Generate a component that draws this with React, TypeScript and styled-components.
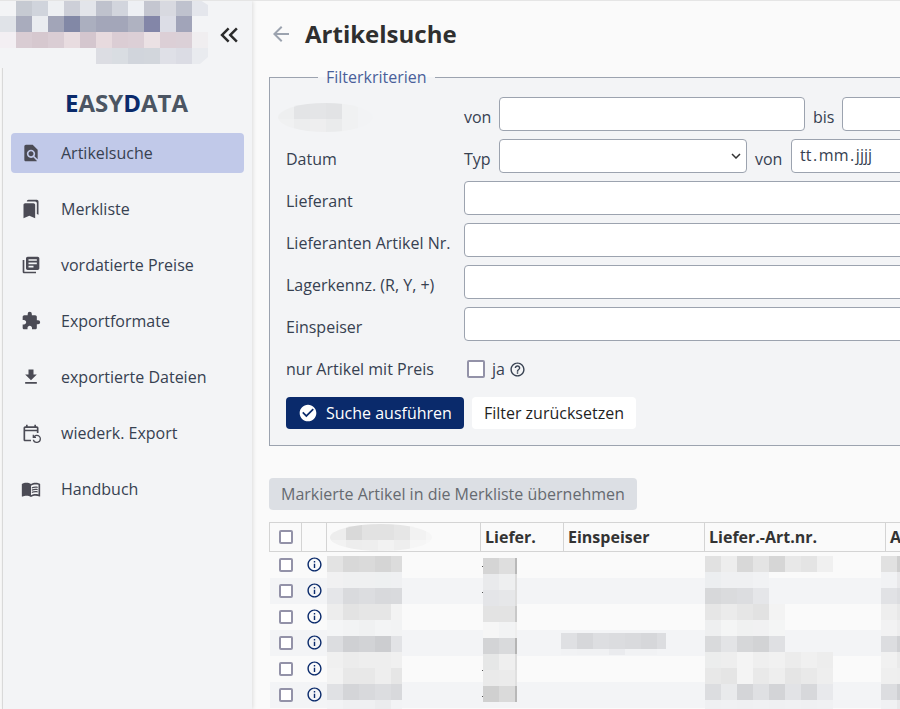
import styled, { createGlobalStyle } from 'styled-components';
import {
  MdArrowBack,
  MdBookmarks,
  MdCheckCircle,
  MdExtension,
  MdFileDownload,
  MdFindInPage,
  MdHelpOutline,
  MdInfoOutline,
  MdKeyboardDoubleArrowLeft,
  MdLibraryBooks,
  MdMenuBook,
  MdOutlineEventRepeat,
} from 'react-icons/md';

const navItems = [
  { label: 'Artikelsuche', icon: MdFindInPage, active: true },
  { label: 'Merkliste', icon: MdBookmarks },
  { label: 'vordatierte Preise', icon: MdLibraryBooks },
  { label: 'Exportformate', icon: MdExtension },
  { label: 'exportierte Dateien', icon: MdFileDownload },
  { label: 'wiederk. Export', icon: MdOutlineEventRepeat },
  { label: 'Handbuch', icon: MdMenuBook },
];

// the blurred parts of the screenshot, as rows of 16px blocks
const logoBlocks = [
  ['#f3f4f6', '#c6cad2', '#d0d4dc', '#eef0f3', '#cdcfd8', '#e3e5ea', '#bfc2cd', '#d2d5dd', '#eef0f4', '#c4c6d0', '#d8d9e0', '#bfc2ce', '#e4e6ec'],
  ['#e0e3e8', '#a9acbd', '#eaecf0', '#a2a5b8', '#8288a6', '#abafbf', '#a3a6b9', '#a3a6b9', '#afb2c1', '#8386a8', '#dcdde6', '#a1a4b9', '#f3f4f6'],
  ['#f3eff3', '#d9ccd3', '#d6c8cf', '#dacdd4', '#e8dce0', '#d4c6ce', '#e7dade', '#dbcdd4', '#dccfd6', '#ebe1e4', '#dccfd6', '#dbd0d7', '#f0eef0'],
  ['', '', '', '', '', '', '#dcdde3', '#d9dde2', '#d1d5dc', '#d2d6dc', '#dfe0e7', '#dbdce4', '#e9ebef'],
];

const filterLabelBlocks = [
  ['#eeeff0', '#e3e4e6', '#e4e5e7', '#e2e3e5', '#f0f1f2', '#f2f3f5'],
  ['#f0f1f2', '#ecedee', '#eeeeef', '#eaebec', '#f0f1f2', '#f2f3f5'],
];

const headBlocks = [
  ['#ededed', '#d9d9d9', '#e2e2e2', '#e2e2e2', '#e6e6e6', '#f2f2f2', '#f6f6f6'],
  ['#f2f2f2', '#ededed', '#eeeeee', '#f2f2f2', '#eeeeee', '#f6f6f6', '#f8f8f8'],
];

const nameBlocks = [
  ['#e3e3e3', '#d8d8d8', '#dadada', '#d5d5d5', '#dcdcdc'],
  ['#f1f1f2', '#eff0f1', '#eff0f1', '#eef0f1', '#eff0f2'],
  ['#e5e6e9', '#d9dadd', '#dcdde0', '#d8d9dc', '#d9dadd'],
  ['#ededed', '#e3e3e3', '#e6e6e6', '#e6e6e6', '#f3f3f3'],
  ['#f4f5f6', '#f2f3f4', '#f0f1f2', '#f3f4f5', '#f2f3f4'],
  ['#dcdde0', '#cfd0d3', '#d2d3d6', '#cccdd0', '#e2e3e6'],
  ['#f0f0f0', '#ececec', '#eeeeee', '#eeeeee', '#f0f0f0'],
  ['#f2f2f2', '#e8e8e8', '#e8e8e8', '#eeeeee', '#e6e6e6'],
  ['#e0e1e4', '#d4d5d8', '#d8d9dc', '#dcdde0', '#d8d9dc'],
  ['#f2f3f5', '#eff0f2', '#eff0f2', '#ebecee', '#f2f3f5'],
];

const lieferBlocks = [
  ['#d5d5d5', '#dedede', '#b8b8b8'],
  ['#e9eaec', '#eeeff0', '#dcdcdc'],
  ['#e4e5e8', '#e6e7e9', '#dddddd'],
  ['#e3e3e3', '#e3e3e3', '#c8c8c8'],
  ['#f6f6f6', '#f2f3f4', '#eeeeee'],
  ['#d3d4d6', '#d9dadc', '#b4b4b4'],
  ['#e6e7e7', '#efefef', '#dddddd'],
  ['#eaeaea', '#ebebeb', '#e0e0e0'],
  ['#d0d0d0', '#dadada', '#b8b8b8'],
];

const einspeiserBlocks = [
  ['#dfe0e3', '#d6d7da', '#dddee1', '#dbdcdf', '#d9dadd', '#d6d7da', '#dcdde0'],
  ['#f1f2f4', '#f0f1f3', '#f0f1f3', '#eaebee', '#f1f2f4', '#f1f2f4', ''],
];

const artNrBlocks = [
  ['#e1e1e1', '#ededed', '#d8d8d8', '#e4e4e4', '#d6d6d6', '#e8e8e8', '#e4e4e4', '#f0f0f0'],
  ['#eceef0', '#eff0f2', '#eff0f2', '#f1f2f4', '', '', '', ''],
  ['#d7d8da', '#dadbdd', '#dcdde0', '#e5e6e9', '', '', '', ''],
  ['#e6e6e6', '#ebebeb', '#e6e6e6', '#e2e2e2', '#f3f3f3', '', '', ''],
  ['#eeeff0', '#f4f5f5', '#f0f1f1', '#f1f1f2', '#f4f5f5', '', '', ''],
  ['#d9dadc', '#e3e4e6', '#d6d7d9', '#d2d3d5', '#dfe0e3', '', '', ''],
  ['#eceded', '#eeeeee', '#f4f4f4', '#efefef', '#f1f1f1', '#ececec', '#f0f0f0', '#ededed'],
  ['#e8e8e8', '#e5e5e5', '#f4f4f4', '#e9e9e9', '#eeeeee', '#e5e5e5', '#e9e9e9', '#eeeeee'],
  ['#dcdde0', '#e9eaec', '#d4d5d8', '#dfe0e3', '#d3d4d7', '#e2e3e6', '#d7d8db', '#e8e9ec'],
  ['#eff0f2', '#f0f1f3', '#eff0f2', '#f0f1f3', '#eff0f2', '#f0f1f3', '#eff0f2', '#f0f1f3'],
];

const lastBlocks = [
  ['#e1e1e1', '#cfcfcf'],
  ['#f1f2f4', '#e8e8ea'],
  ['#e1e2e5', '#dcdde0'],
  ['#eeeeee', '#e8e8e8'],
  ['#f2f2f3', '#ededee'],
  ['#dcdde0', '#d0d1d4'],
  ['#f1f1f1', '#eaeaea'],
  ['#efefef', '#eeeeee'],
  ['#dcdde0', '#cfd0d3'],
  ['#f0f1f3', '#e8e8ea'],
];

const lieferTicks = [44, 70, 148, 174];

const Blocks = ({ rows, columns, className }: { rows: string[][]; columns: string; className?: string }) => (
  <BlockGrid className={className} $columns={columns}>
    {rows.flat().map((color, i) => (
      <span key={i} style={{ background: color || 'transparent' }} />
    ))}
  </BlockGrid>
);

const App = () => {
  return (
    <>
      <GlobalStyle />
      <Page>
        <Sidebar>
          <SidebarHead>
            <LogoBlocks rows={logoBlocks} columns="repeat(13, 16px)" />
            <CollapseButton>
              <MdKeyboardDoubleArrowLeft size={30} />
            </CollapseButton>
          </SidebarHead>
          <Brand>
            <BrandInitial>E</BrandInitial>ASY<BrandInitial>D</BrandInitial>ATA
          </Brand>
          <Nav>
            {navItems.map(({ label, icon: Icon, active }) => (
              <NavItem key={label} $active={active}>
                <Icon size={20} />
                {label}
              </NavItem>
            ))}
          </Nav>
        </Sidebar>
        <Main>
          <TitleRow>
            <MdArrowBack size={24} color="#9ca3af" />
            <Title>Artikelsuche</Title>
          </TitleRow>
          <Filter>
            <Legend>Filterkriterien</Legend>
            <FilterRow>
              <Label>
                <FilterLabelBlocks rows={filterLabelBlocks} columns="repeat(6, 16px)" />
              </Label>
              <Inline>
                <InlineLabel $width={35}>von</InlineLabel>
                <Input $width={306} />
                <InlineLabel $width={37} $indent={8}>bis</InlineLabel>
                <Input $width={200} />
              </Inline>
            </FilterRow>
            <FilterRow>
              <Label>Datum</Label>
              <Inline>
                <InlineLabel $width={35}>Typ</InlineLabel>
                <Select />
                <InlineLabel $width={44} $indent={8}>von</InlineLabel>
                <DateInput defaultValue={'tt\u200a.\u200amm\u200a.\u200ajjjj'} />
              </Inline>
            </FilterRow>
            <FilterRow>
              <Label>Lieferant</Label>
              <Input $width={560} />
            </FilterRow>
            <FilterRow>
              <Label>Lieferanten Artikel Nr.</Label>
              <Input $width={560} />
            </FilterRow>
            <FilterRow>
              <Label>Lagerkennz. (R, Y, +)</Label>
              <Input $width={560} />
            </FilterRow>
            <FilterRow>
              <Label>Einspeiser</Label>
              <Input $width={560} />
            </FilterRow>
            <FilterRow>
              <Label>nur Artikel mit Preis</Label>
              <CheckField>
                <Check $large />
                ja
                <MdHelpOutline size={17} />
              </CheckField>
            </FilterRow>
            <Actions>
              <PrimaryButton>
                <MdCheckCircle size={20} />
                Suche ausführen
              </PrimaryButton>
              <SecondaryButton>Filter zurücksetzen</SecondaryButton>
            </Actions>
          </Filter>
          <TransferButton>Markierte Artikel in die Merkliste übernehmen</TransferButton>
          <TableWrap>
            <Table>
              <colgroup>
                <col width={32} />
                <col width={25} />
                <col width={154} />
                <col width={83} />
                <col width={141} />
                <col width={181} />
                <col width={60} />
              </colgroup>
              <thead>
                <tr>
                  <HeadCell><Check /></HeadCell>
                  <HeadCell />
                  <HeadCell>
                    <HeadBlocks rows={headBlocks} columns="repeat(7, 16px)" />
                  </HeadCell>
                  <HeadCell>Liefer.</HeadCell>
                  <HeadCell>Einspeiser</HeadCell>
                  <HeadCell>Liefer.-Art.nr.</HeadCell>
                  <HeadCell>Art</HeadCell>
                </tr>
              </thead>
              <tbody>
                {[0, 1, 2, 3, 4, 5].map((row) => (
                  <BodyRow key={row}>
                    <BodyCell><Check /></BodyCell>
                    <BodyCell><InfoIcon size={17} /></BodyCell>
                    <BodyCell colSpan={5} />
                  </BodyRow>
                ))}
              </tbody>
            </Table>
            <NameBlocks rows={nameBlocks} columns="repeat(4, 16px) 11px" />
            {lieferTicks.map((top) => (
              <Tick key={top} $top={top} />
            ))}
            <LieferBlocks rows={lieferBlocks} columns="16px 16px 2px" />
            <EinspeiserBlocks rows={einspeiserBlocks} columns="repeat(6, 16px) 9px" />
            <ArtNrBlocks rows={artNrBlocks} columns="repeat(8, 16px)" />
            <LastBlocks rows={lastBlocks} columns="16px 3px" />
          </TableWrap>
        </Main>
      </Page>
    </>
  );
};

export default App;

const GlobalStyle = createGlobalStyle`
  html, body {
    margin: 0;
    height: 100%;
    overflow: hidden;
    background: #fafafa;
  }

  body, input, select, button {
    font-family: "Open Sans", "Noto Sans", "Liberation Sans", sans-serif;
    font-size: 16px;
  }

  * {
    box-sizing: border-box;
  }
`;

const Page = styled.div`
  display: flex;
  width: 900px;
  height: 709px;
  overflow: hidden;
  border-top: 1px solid #e5e5e5;
`;

const Sidebar = styled.aside`
  flex: 0 0 250px;
  margin-left: 2px;
  background: #f3f4f6;
  border-left: 1px solid #d9d9d9;
  box-shadow: 1px 0 4px rgba(0, 0, 0, 0.12);
  z-index: 1;
`;

const SidebarHead = styled.div`
  display: flex;
  align-items: flex-start;
  height: 67px;
  margin-left: -3px;
  background: #f3f4f6;
`;

const BlockGrid = styled.div<{ $columns: string }>`
  display: grid;
  grid-template-columns: ${(p) => p.$columns};
  grid-auto-rows: 16px;
`;

const LogoBlocks = styled(Blocks)`
  margin-top: -1px;
  clip-path: polygon(0 0, 200px 0, 208px 5px, 208px 57px, 200px 64px, 0 64px);
`;

const CollapseButton = styled.div`
  display: flex;
  margin: 19px 0 0 6px;
  color: #2b2b2b;
`;

const Brand = styled.div`
  margin-top: 19px;
  text-align: center;
  font-size: 24px;
  font-weight: 700;
  line-height: 32px;
  color: #4b5563;
  margin-right: 2px;
`;

const BrandInitial = styled.span`
  color: #0a2a6b;
`;

const Nav = styled.nav`
  display: flex;
  flex-direction: column;
  gap: 16px;
  margin: 14px 8px 0;
`;

const NavItem = styled.a<{ $active?: boolean }>`
  display: flex;
  align-items: center;
  gap: 20px;
  height: 40px;
  padding-left: 10px;
  border-radius: 4px;
  color: #374151;
  background: ${(p) => (p.$active ? '#c1c9e9' : 'transparent')};

  svg {
    color: #4b4b55;
    flex: none;
  }
`;

const Main = styled.main`
  flex: 1;
  min-width: 0;
  padding: 0 0 0 17px;
  overflow: hidden;
`;

const TitleRow = styled.div`
  display: flex;
  align-items: center;
  gap: 12px;
  height: 65px;
`;

const Title = styled.h1`
  margin: 0;
  font-size: 24px;
  font-weight: 700;
  color: #2f2f2f;
`;

const Filter = styled.fieldset`
  width: 760px;
  height: 380px;
  margin: 0;
  padding: 9px 0 0 16px;
  border: 1px solid #9ca3af;
  background: #f3f4f6;
  display: flex;
  flex-direction: column;
  gap: 8px;
`;

const Legend = styled.legend`
  margin-left: 32px;
  padding: 0 8px;
  color: #4a5f9a;
  line-height: 22px;
`;

const FilterRow = styled.div`
  display: flex;
  align-items: center;
  height: 34px;
`;

const Label = styled.label`
  flex: 0 0 178px;
  padding-top: 6px;
  color: #374151;
  position: relative;
`;

const FilterLabelBlocks = styled(Blocks)`
  position: absolute;
  left: -8px;
  top: -8px;
  height: 29px;
  width: 95px;
  overflow: hidden;
  border-radius: 50%;
`;

const Inline = styled.div`
  display: flex;
  align-items: center;
`;

const InlineLabel = styled.span<{ $width: number; $indent?: number }>`
  flex: 0 0 ${(p) => p.$width}px;
  padding-left: ${(p) => p.$indent ?? 0}px;
  padding-top: 6px;
  color: #374151;
`;

const Input = styled.input<{ $width: number }>`
  flex: none;
  width: ${(p) => p.$width}px;
  height: 34px;
  padding: 0 8px;
  border: 1px solid #9ca3af;
  border-radius: 4px;
  background: #fff;
`;

const DateInput = styled.input`
  width: 200px;
  height: 34px;
  padding: 0 8px 2px;
  border: 1px solid #9ca3af;
  border-radius: 4px;
  background: #fff;
  color: #374151;
`;

const Select = styled.select`
  width: 248px;
  height: 34px;
  border: 1px solid #9ca3af;
  border-radius: 4px;
  appearance: none;
  background: #fff url("data:image/svg+xml,%3Csvg xmlns='http://www.w3.org/2000/svg' width='10' height='6'%3E%3Cpath d='M1 1l4 4 4-4' fill='none' stroke='%23333' stroke-width='1.5'/%3E%3C/svg%3E") no-repeat right 5px center;
`;

const CheckField = styled.div`
  display: flex;
  align-items: center;
  gap: 7px;
  padding-top: 6px;
  color: #374151;
  margin-left: 3px;

  svg {
    margin-left: -3px;
  }
`;

const Check = styled.input.attrs({ type: 'checkbox' })<{ $large?: boolean }>`
  appearance: none;
  display: block;
  margin: 0;
  width: ${(p) => (p.$large ? 18 : 14)}px;
  height: ${(p) => (p.$large ? 18 : 14)}px;
  border: 2px solid #9392a8;
  border-radius: 2px;
  background: #fff;
`;

const Actions = styled.div`
  display: flex;
  gap: 8px;
  margin-top: 6px;
`;

const PrimaryButton = styled.button`
  display: flex;
  align-items: center;
  gap: 8px;
  height: 32px;
  padding: 0 12px;
  border: 0;
  border-radius: 4px;
  background: #0a2a6b;
  color: #fff;
`;

const SecondaryButton = styled.button`
  height: 32px;
  padding: 0 12px;
  border: 0;
  border-radius: 4px;
  background: #fff;
  color: #1f1f1f;
`;

const TransferButton = styled.button`
  display: block;
  height: 32px;
  margin-top: 32px;
  padding: 0 12px;
  border: 0;
  border-radius: 4px;
  background: #dcdfe4;
  color: #666a70;
`;

const TableWrap = styled.div`
  position: relative;
  margin-top: 12px;
  width: 760px;
`;

const Table = styled.table`
  table-layout: fixed;
  width: 676px;
  border-collapse: collapse;
`;

const HeadCell = styled.th`
  height: 29px;
  padding: 0 4px;
  border: 1px solid #d4d4d4;
  text-align: left;
  font-weight: 700;
  color: #333;
  white-space: nowrap;
  overflow: hidden;
  position: relative;

  input {
    margin: 0 auto;
  }
`;

const HeadBlocks = styled(Blocks)`
  position: absolute;
  left: 3px;
  top: 1px;
  width: 102px;
  height: 27px;
  overflow: hidden;
  border-radius: 50%;
`;

const BodyRow = styled.tr`
  height: 26px;

  &:nth-child(even) {
    background: #f3f4f6;
  }
`;

const BodyCell = styled.td`
  padding: 0;

  input,
  svg {
    display: block;
    margin: 0 auto;
  }
`;

const InfoIcon = styled(MdInfoOutline)`
  color: #0a2a6b;
`;

const NameBlocks = styled(Blocks)`
  position: absolute;
  left: 58px;
  top: 34px;
`;

const Tick = styled.span<{ $top: number }>`
  position: absolute;
  left: 213px;
  top: ${(p) => p.$top}px;
  width: 1px;
  height: 1px;
  background: #555;
`;

const LieferBlocks = styled(Blocks)`
  position: absolute;
  left: 214px;
  top: 36px;
`;

const EinspeiserBlocks = styled(Blocks)`
  position: absolute;
  left: 292px;
  top: 111px;
  height: 22px;
  overflow: hidden;
`;

const ArtNrBlocks = styled(Blocks)`
  position: absolute;
  left: 436px;
  top: 34px;
`;

const LastBlocks = styled(Blocks)`
  position: absolute;
  left: 612px;
  top: 34px;
`;
